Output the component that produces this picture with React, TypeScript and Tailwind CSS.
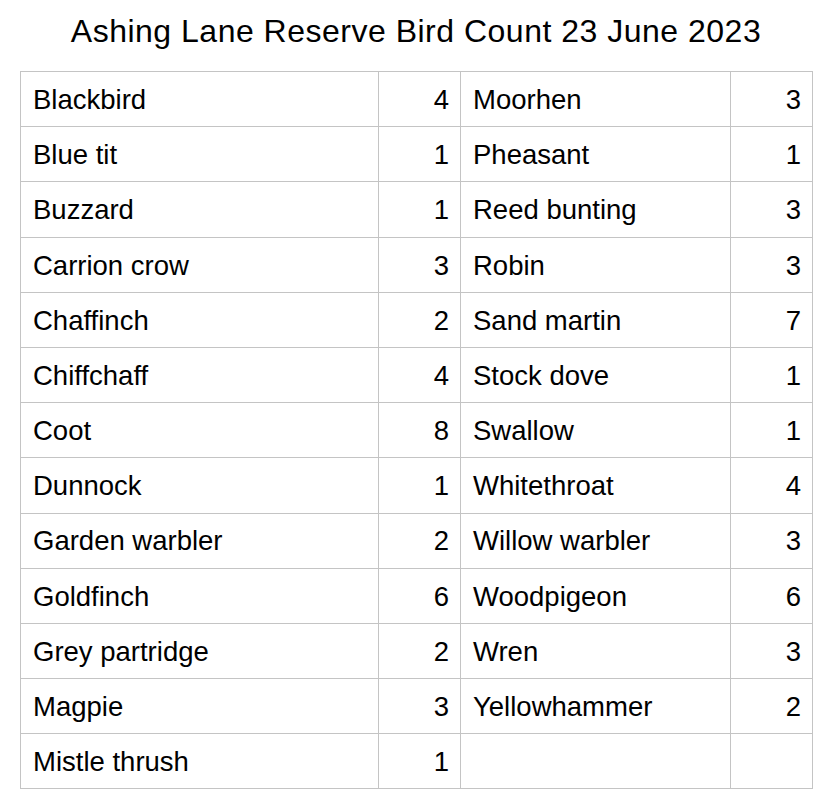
const left: [string, number][] = [
  ['Blackbird', 4],
  ['Blue tit', 1],
  ['Buzzard', 1],
  ['Carrion crow', 3],
  ['Chaffinch', 2],
  ['Chiffchaff', 4],
  ['Coot', 8],
  ['Dunnock', 1],
  ['Garden warbler', 2],
  ['Goldfinch', 6],
  ['Grey partridge', 2],
  ['Magpie', 3],
  ['Mistle thrush', 1],
]

const right: [string, number][] = [
  ['Moorhen', 3],
  ['Pheasant', 1],
  ['Reed bunting', 3],
  ['Robin', 3],
  ['Sand martin', 7],
  ['Stock dove', 1],
  ['Swallow', 1],
  ['Whitethroat', 4],
  ['Willow warbler', 3],
  ['Woodpigeon', 6],
  ['Wren', 3],
  ['Yellowhammer', 2],
]

export default function App() {
  return (
    <div className="w-[824px] h-[800px] bg-white text-black overflow-hidden" style={{ fontFamily: '"Liberation Sans", Arial, sans-serif' }}>
      {/* Title */}
      <h1 className="pl-[8px] pt-[11px] h-[71px] text-center text-[32px] tracking-[0.5px] leading-[40px] font-normal">
        Ashing Lane Reserve Bird Count 23 June 2023
      </h1>

      {/* Count table */}
      <table className="ml-[20px] w-[792px] table-fixed border-collapse text-[27.5px]">
        <colgroup>
          <col className="w-[358px]" />
          <col className="w-[82px]" />
          <col className="w-[270px]" />
          <col className="w-[82px]" />
        </colgroup>
        <tbody>
          {left.map((l, i) => {
            const r = right[i]
            return (
              <tr key={l[0]} className="h-[55.2px]">
                <td className="border border-[#c4c4c4] px-[12px] pt-[1px]">{l[0]}</td>
                <td className="border border-[#c4c4c4] px-[11px] pt-[1px] text-right">{l[1]}</td>
                <td className="border border-[#c4c4c4] px-[12px] pt-[1px]">{r ? r[0] : ''}</td>
                <td className="border border-[#c4c4c4] px-[11px] pt-[1px] text-right">{r ? r[1] : ''}</td>
              </tr>
            )
          })}
        </tbody>
      </table>
    </div>
  )
}
